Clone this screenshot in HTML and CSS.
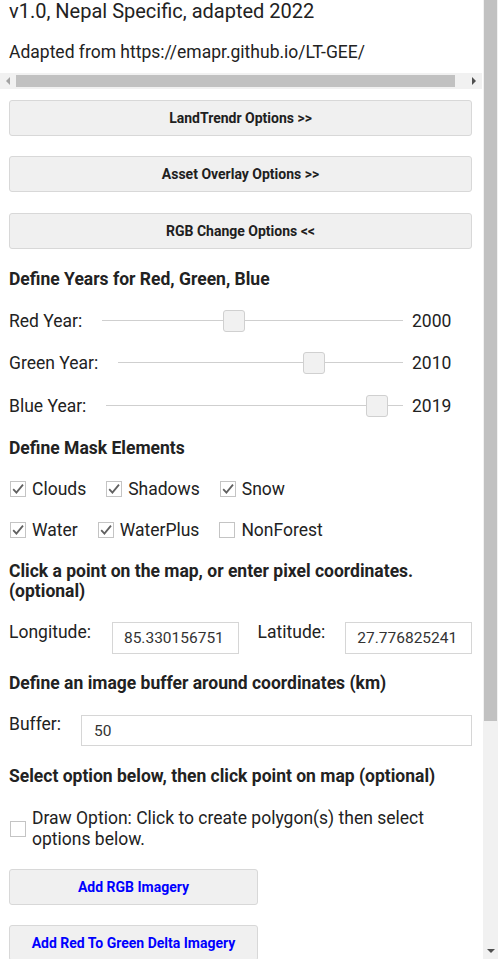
FILE: index.html
```html
<!DOCTYPE html>
<html>
<head>
<meta charset="utf-8">
<link rel="stylesheet" href="styles.css">
</head>
<body>
<div class="app">
  <div class="main">
    <div class="title">v1.0, Nepal Specific, adapted 2022</div>
    <div class="subtitle">Adapted from https://emapr.github.io/LT-GEE/</div>
    <div class="hscroll">
      <div class="sbtn"><span class="tri-left"></span></div>
      <div class="hthumb"></div>
      <div class="hspace"></div>
      <div class="sbtn"><span class="tri-right"></span></div>
    </div>
    <div class="content">
      <button class="btn btn-first">LandTrendr Options &gt;&gt;</button>
      <button class="btn btn-second">Asset Overlay Options &gt;&gt;</button>
      <button class="btn btn-third">RGB Change Options &lt;&lt;</button>

      <div class="heading h-years">Define Years for Red, Green, Blue</div>
      <div class="slider-row s-red">
        <span class="label">Red Year:</span>
        <div class="track"><div class="thumb" style="left: calc((100% - 22px) * 0.432)"></div></div>
        <span class="value">2000</span>
      </div>
      <div class="slider-row s-green">
        <span class="label">Green Year:</span>
        <div class="track"><div class="thumb" style="left: calc((100% - 22px) * 0.703)"></div></div>
        <span class="value">2010</span>
      </div>
      <div class="slider-row s-blue">
        <span class="label">Blue Year:</span>
        <div class="track"><div class="thumb" style="left: calc((100% - 22px) * 0.946)"></div></div>
        <span class="value">2019</span>
      </div>

      <div class="heading h-mask">Define Mask Elements</div>
      <div class="check-row cr-1">
        <label class="cb"><svg class="box" viewBox="0 0 16 16"><rect x="0.5" y="0.5" width="15" height="15" fill="#fff" stroke="#c4c4c4"/><path d="M3.2 8.2 L6.4 11.6 L13 3.6" fill="none" stroke="#606060" stroke-width="1.8"/></svg><span>Clouds</span></label>
        <label class="cb"><svg class="box" viewBox="0 0 16 16"><rect x="0.5" y="0.5" width="15" height="15" fill="#fff" stroke="#c4c4c4"/><path d="M3.2 8.2 L6.4 11.6 L13 3.6" fill="none" stroke="#606060" stroke-width="1.8"/></svg><span>Shadows</span></label>
        <label class="cb"><svg class="box" viewBox="0 0 16 16"><rect x="0.5" y="0.5" width="15" height="15" fill="#fff" stroke="#c4c4c4"/><path d="M3.2 8.2 L6.4 11.6 L13 3.6" fill="none" stroke="#606060" stroke-width="1.8"/></svg><span>Snow</span></label>
      </div>
      <div class="check-row cr-2">
        <label class="cb"><svg class="box" viewBox="0 0 16 16"><rect x="0.5" y="0.5" width="15" height="15" fill="#fff" stroke="#c4c4c4"/><path d="M3.2 8.2 L6.4 11.6 L13 3.6" fill="none" stroke="#606060" stroke-width="1.8"/></svg><span>Water</span></label>
        <label class="cb"><svg class="box" viewBox="0 0 16 16"><rect x="0.5" y="0.5" width="15" height="15" fill="#fff" stroke="#c4c4c4"/><path d="M3.2 8.2 L6.4 11.6 L13 3.6" fill="none" stroke="#606060" stroke-width="1.8"/></svg><span>WaterPlus</span></label>
        <label class="cb"><svg class="box" viewBox="0 0 16 16"><rect x="0.5" y="0.5" width="15" height="15" fill="#fff" stroke="#c4c4c4"/></svg><span>NonForest</span></label>
      </div>

      <div class="heading h-click">Click a point on the map, or enter pixel coordinates. (optional)</div>
      <div class="coord-row">
        <span class="label lon-label">Longitude:</span>
        <div class="input coord-input">85.330156751</div>
        <span class="label lat-label">Latitude:</span>
        <div class="input coord-input">27.776825241</div>
      </div>

      <div class="heading h-buffer">Define an image buffer around coordinates (km)</div>
      <div class="buffer-row">
        <span class="label buf-label">Buffer:</span>
        <div class="input buf-input">50</div>
      </div>

      <div class="heading h-select">Select option below, then click point on map (optional)</div>
      <label class="draw-row">
        <svg class="box" viewBox="0 0 16 16"><rect x="0.5" y="0.5" width="15" height="15" fill="#fff" stroke="#c4c4c4"/></svg>
        <span class="draw-text">Draw Option: Click to create polygon(s) then select options below.</span>
      </label>

      <button class="btn btn-blue btn-rgb">Add RGB Imagery</button>
      <button class="btn btn-blue btn-delta">Add Red To Green Delta Imagery</button>
    </div>
  </div>
  <div class="vscroll">
    <div class="vthumb"></div>
    <div class="vspace"></div>
    <div class="vbtn"><span class="tri-down"></span></div>
  </div>
</div>
</body>
</html>
```

FILE: styles.css
```css
html, body {
  margin: 0;
  padding: 0;
  background: #ffffff;
}
body {
  font-family: Roboto, "Noto Sans", "Liberation Sans", sans-serif;
  color: #222222;
}
.app {
  display: flex;
  width: 498px;
  height: 959px;
  overflow: hidden;
}
.main {
  width: 483px;
  display: flex;
  flex-direction: column;
  overflow: hidden;
}
.title {
  font-size: 20px;
  line-height: 23px;
  padding-left: 9px;
  white-space: nowrap;
}
.subtitle {
  font-size: 17.5px;
  line-height: 20px;
  margin-top: 19px;
  padding-left: 9px;
  white-space: nowrap;
}
.hscroll {
  margin-top: 11px;
  width: 482px;
  height: 16px;
  background: #f1f1f1;
  display: flex;
  align-items: center;
  flex-shrink: 0;
}
.sbtn {
  width: 16px;
  height: 16px;
  display: flex;
  align-items: center;
  justify-content: center;
}
.tri-left {
  width: 0;
  height: 0;
  border-top: 4px solid transparent;
  border-bottom: 4px solid transparent;
  border-right: 4px solid #a3a3a3;
}
.tri-right {
  width: 0;
  height: 0;
  border-top: 4px solid transparent;
  border-bottom: 4px solid transparent;
  border-left: 4px solid #505050;
}
.hthumb {
  width: 439px;
  height: 12px;
  background: #c1c1c1;
}
.hspace {
  flex: 1;
}
.content {
  padding: 0 11px 0 9px;
  display: flex;
  flex-direction: column;
  align-items: stretch;
}
.btn {
  font-family: Roboto, "Noto Sans", "Liberation Sans", sans-serif;
  font-weight: bold;
  font-size: 14px;
  color: #202020;
  height: 36px;
  background: #f0f0f0;
  border: 1px solid #d8d8d8;
  border-radius: 3px;
  padding: 0;
  margin: 0;
}
.btn-first { margin-top: 11px; }
.btn-second { margin-top: 20px; }
.btn-third { margin-top: 21px; }
.btn-blue {
  color: #0000ff;
  width: 249px;
  align-self: flex-start;
}
.btn-rgb { margin-top: 19px; }
.btn-delta { margin-top: 20px; }

.heading {
  font-weight: bold;
  font-size: 17.5px;
  line-height: 20px;
}
.h-years { margin-top: 20px; }
.h-mask { margin-top: 21px; }
.h-click { margin-top: 21px; }
.h-buffer { margin-top: 19px; }
.h-select { margin-top: 20px; }

.label {
  font-size: 17.5px;
  line-height: 20px;
  white-space: nowrap;
}
.slider-row {
  display: flex;
  align-items: center;
  height: 22px;
}
.s-red { margin-top: 21px; }
.s-green { margin-top: 20px; }
.s-blue { margin-top: 21px; }
.slider-row .label {
  margin-right: 20px;
}
.track {
  flex: 1;
  height: 22px;
  position: relative;
}
.track::before {
  content: "";
  position: absolute;
  left: 0;
  right: 0;
  top: 10px;
  height: 1px;
  background: #cfcfcf;
}
.thumb {
  position: absolute;
  top: 0;
  width: 20px;
  height: 20px;
  background: #f1f1f1;
  border: 1px solid #d0d0d0;
  border-radius: 3px;
}
.value {
  font-size: 17.5px;
  line-height: 20px;
  width: 39px;
  margin-left: 9px;
  margin-right: 21px;
  text-align: left;
  white-space: nowrap;
}

.check-row {
  display: flex;
  align-items: center;
  height: 20px;
  margin-top: 21px;
}
.cb {
  display: flex;
  align-items: center;
  font-size: 17.5px;
  line-height: 20px;
  margin-right: 19px;
  white-space: nowrap;
}
.box {
  width: 16px;
  height: 16px;
  margin-left: 1px;
  margin-right: 6px;
  flex-shrink: 0;
}

.coord-row {
  display: flex;
  align-items: flex-start;
  margin-top: 21px;
}
.lon-label { margin-right: 21px; }
.lat-label { margin-left: 19px; margin-right: 20px; }
.input {
  box-sizing: border-box;
  border: 1px solid #d6d6d6;
  font-size: 15.5px;
  color: #333333;
  display: flex;
  align-items: center;
}
.coord-input {
  width: 127px;
  height: 32px;
  padding-left: 11px;
}
.buffer-row {
  display: flex;
  align-items: flex-start;
  margin-top: 22px;
}
.buf-label {
  margin-right: 20px;
  margin-top: -1px;
}
.buf-input {
  flex: 1;
  height: 31px;
  padding-left: 12px;
}

.draw-row {
  display: flex;
  align-items: center;
  margin-top: 22px;
}
.draw-text {
  font-size: 17.5px;
  line-height: 21px;
  flex: 1;
}

.vscroll {
  width: 15px;
  height: 959px;
  background: #f1f1f1;
  display: flex;
  flex-direction: column;
}
.vthumb {
  height: 721px;
  margin: 0 1px;
  background: #c1c1c1;
}
.vspace {
  flex: 1;
}
.vbtn {
  height: 16px;
  display: flex;
  align-items: center;
  justify-content: center;
}
.tri-down {
  width: 0;
  height: 0;
  border-left: 4px solid transparent;
  border-right: 4px solid transparent;
  border-top: 4px solid #505050;
}
```
